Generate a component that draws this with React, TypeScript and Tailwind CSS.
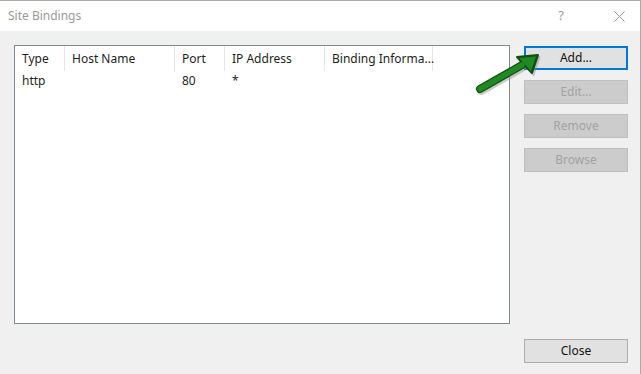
const columns = [
  { label: 'Type', width: 'w-[50px]' },
  { label: 'Host Name', width: 'w-[110px]' },
  { label: 'Port', width: 'w-[50px]' },
  { label: 'IP Address', width: 'w-[100px]' },
  { label: 'Binding Informa...', width: 'w-[108px]' },
]

const row = ['http', '', '80', '*', '']

function SideButton({ label, disabled, focused }: { label: string; disabled?: boolean; focused?: boolean }) {
  const tone = focused
    ? 'border-2 border-[#0078d7] bg-[#e1e1e1] text-[#111]'
    : disabled
      ? 'border border-[#bfbfbf] bg-[#cccccc] text-[#a3a3a3]'
      : 'border border-[#adadad] bg-[#e1e1e1] text-[#111]'
  return (
    <div className={`flex h-[24px] w-[104px] shrink-0 items-center justify-center text-[12px] ${tone}`}>{label}</div>
  )
}

function Arrow() {
  return (
    <svg className="absolute left-[470px] top-[45px]" width="80" height="55" viewBox="0 0 80 55">
      <g transform="translate(1.5,2)" fill="#8a8a8a" stroke="#8a8a8a" opacity="0.45">
        <line x1="10" y1="43" x2="52" y2="19" strokeWidth="8" strokeLinecap="round" />
        <polygon points="47,11 68,9 62,27" strokeWidth="2" strokeLinejoin="round" />
      </g>
      <line x1="10" y1="43" x2="52" y2="19" stroke="#0f4f12" strokeWidth="8" strokeLinecap="round" />
      <polygon points="47,11 68,9 62,27" fill="#0f4f12" stroke="#0f4f12" strokeWidth="2" strokeLinejoin="round" />
      <line x1="10" y1="43" x2="52" y2="19" stroke="#1f8a22" strokeWidth="5.5" strokeLinecap="round" />
      <polygon points="49,12 66,10.5 61,25" fill="#1f8a22" />
    </svg>
  )
}

export default function App() {
  return (
    <div className="relative flex h-[374px] w-[641px] flex-col overflow-hidden border-t border-r border-[#aaaaaa] bg-[#f0f0f0] font-['Noto_Sans','Liberation_Sans',sans-serif] text-[12px]">
      <header className="flex h-[30px] shrink-0 items-center bg-white">
        <span className="pl-[8px] text-[12px] text-[#9a9a9a]">Site Bindings</span>
        <span className="ml-auto pr-[50px] text-[13px] text-[#9a9a9a]">?</span>
        <svg className="mr-[15px]" width="11" height="11" viewBox="0 0 11 11">
          <path d="M0.5 0.5 L10.5 10.5 M10.5 0.5 L0.5 10.5" stroke="#9a9a9a" strokeWidth="1" />
        </svg>
      </header>

      <div className="flex flex-1 flex-col pl-[14px] pt-[14px]">
        <div className="flex gap-[14px]">
          <div className="h-[279px] w-[496px] shrink-0 border border-[#828790] bg-white">
            <div className="flex h-[25px] items-center">
              {columns.map((col) => (
                <div
                  key={col.label}
                  className={`flex h-full shrink-0 items-center whitespace-nowrap border-r border-[#e5e5e5] pl-[7px] pt-[1px] text-[#1e1e1e] ${col.width}`}
                >
                  {col.label}
                </div>
              ))}
            </div>
            <div className="flex h-[20px] items-center">
              {columns.map((col, i) => (
                <div key={col.label} className={`shrink-0 pl-[7px] text-[#1e1e1e] ${col.width}`}>
                  {row[i]}
                </div>
              ))}
            </div>
          </div>

          <div className="flex flex-col gap-[10px] pt-px">
            <SideButton label="Add..." focused />
            <SideButton label="Edit..." disabled />
            <SideButton label="Remove" disabled />
            <SideButton label="Browse" disabled />
          </div>
        </div>

        <div className="mt-[15px] flex pl-[510px]">
          <SideButton label="Close" />
        </div>
      </div>

      <Arrow />
    </div>
  )
}
